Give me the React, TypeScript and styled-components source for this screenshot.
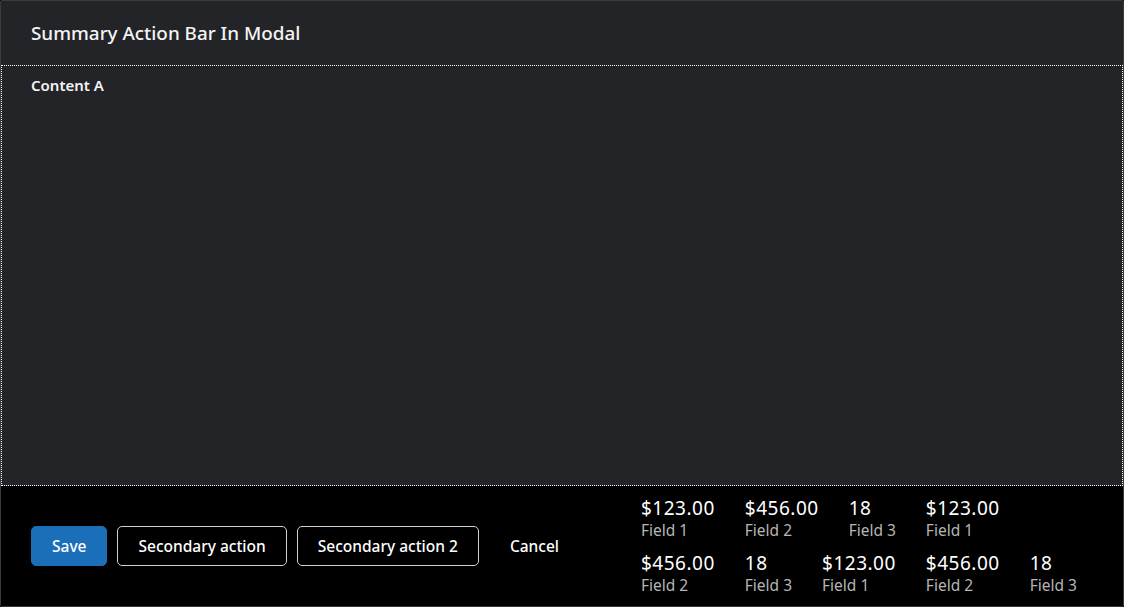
import React from "react";
import styled, { createGlobalStyle } from "styled-components";

const Global = createGlobalStyle`
  html, body { margin: 0; padding: 0; background: #000; }
  body { font-family: "Noto Sans", "Open Sans", sans-serif; }
  #root { height: 100vh; }
`;

const Modal = styled.div`
  box-sizing: border-box;
  height: 607px;
  width: 1124px;
  border: 1px solid #3a3b3f;
  border-radius: 2px;
  display: flex;
  flex-direction: column;
  background: #232428;
  color: #f4f4f4;
`;

const Header = styled.header`
  height: 64px;
  display: flex;
  align-items: center;
  padding: 0 30px;
  flex: none;
`;

const Title = styled.h1`
  margin: 0;
  font-size: 18.85px;
  font-weight: 500;
  letter-spacing: 0;
`;

const Content = styled.section`
  flex: 1;
  outline: 1px dotted #ffffff;
  outline-offset: -1px;
  padding: 9px 30px;
`;

const ContentLabel = styled.div`
  font-size: 15px;
  font-weight: 600;
  line-height: 22px;
`;

const Footer = styled.footer`
  height: 120px;
  flex: none;
  background: #000;
  display: flex;
  align-items: center;
  padding: 0 38px 0 30px;
`;

const Actions = styled.div`
  display: flex;
  align-items: center;
  gap: 10px;
  width: 610px;
  flex: none;
`;

const Button = styled.button<{ $variant: "primary" | "secondary" | "ghost" }>`
  box-sizing: border-box;
  height: 40px;
  padding: 0 20px;
  border-radius: 5px;
  font-family: inherit;
  font-size: 15.5px;
  font-weight: 500;
  color: #ffffff;
  cursor: pointer;
  background: ${(p) => (p.$variant === "primary" ? "#1b6fb8" : "transparent")};
  border: 1px solid
    ${(p) =>
      p.$variant === "primary"
        ? "#1b6fb8"
        : p.$variant === "secondary"
        ? "#d0d0d0"
        : "transparent"};
`;

const Summary = styled.div`
  flex: 1;
  display: flex;
  flex-wrap: wrap;
  column-gap: 30px;
  row-gap: 11px;
`;

const Item = styled.div`
  display: flex;
  flex-direction: column;
`;

const Value = styled.span`
  font-size: 19px;
  line-height: 22px;
  font-weight: 400;
  letter-spacing: 0.5px;
  color: #ffffff;
`;

const Label = styled.span`
  font-size: 15.5px;
  line-height: 22px;
  color: #b5b5b5;
`;

const items = [
  ["$123.00", "Field 1"],
  ["$456.00", "Field 2"],
  ["18", "Field 3"],
  ["$123.00", "Field 1"],
  ["$456.00", "Field 2"],
  ["18", "Field 3"],
  ["$123.00", "Field 1"],
  ["$456.00", "Field 2"],
  ["18", "Field 3"],
];

export default function App() {
  return (
    <>
      <Global />
      <Modal>
        <Header>
          <Title>Summary Action Bar In Modal</Title>
        </Header>
        <Content>
          <ContentLabel>Content A</ContentLabel>
        </Content>
        <Footer>
          <Actions>
            <Button $variant="primary">Save</Button>
            <Button $variant="secondary">Secondary action</Button>
            <Button $variant="secondary">Secondary action 2</Button>
            <Button $variant="ghost">Cancel</Button>
          </Actions>
          <Summary>
            {items.map(([v, l], i) => (
              <Item key={i}>
                <Value>{v}</Value>
                <Label>{l}</Label>
              </Item>
            ))}
          </Summary>
        </Footer>
      </Modal>
    </>
  );
}
